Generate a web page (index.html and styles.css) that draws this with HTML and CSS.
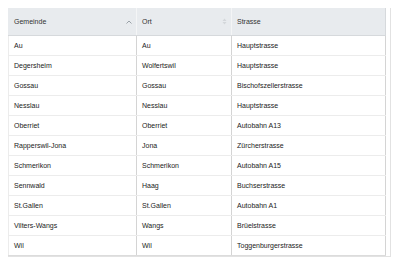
FILE: index.html
```html
<!DOCTYPE html>
<html>
<head>
<meta charset="utf-8">
<link rel="stylesheet" href="styles.css">
</head>
<body>
<div class="wrap">
<table class="grid">
<colgroup><col class="c1"><col class="c2"><col class="c3"></colgroup>
<thead>
<tr>
<th><div class="hd"><span>Gemeinde</span><svg class="sort" width="6" height="4" viewBox="0 0 6 4"><path d="M0.5 3.5 L3 1 L5.5 3.5" fill="none" stroke="#9aa1a7" stroke-width="1"/></svg></div></th>
<th><div class="hd"><span>Ort</span><svg class="sort" width="5" height="7" viewBox="0 0 5 7"><path d="M0.5 3 L2.5 0.5 L4.5 3 Z M0.5 4 L2.5 6.5 L4.5 4 Z" fill="#d3d7da"/></svg></div></th>
<th><div class="hd"><span>Strasse</span></div></th>
</tr>
</thead>
<tbody>
<tr><td>Au</td><td>Au</td><td>Hauptstrasse</td></tr>
<tr><td>Degersheim</td><td>Wolfertswil</td><td>Hauptstrasse</td></tr>
<tr><td>Gossau</td><td>Gossau</td><td>Bischofszellerstrasse</td></tr>
<tr><td>Nesslau</td><td>Nesslau</td><td>Hauptstrasse</td></tr>
<tr><td>Oberriet</td><td>Oberriet</td><td>Autobahn A13</td></tr>
<tr><td>Rapperswil-Jona</td><td>Jona</td><td>Zürcherstrasse</td></tr>
<tr><td>Schmerikon</td><td>Schmerikon</td><td>Autobahn A15</td></tr>
<tr><td>Sennwald</td><td>Haag</td><td>Buchserstrasse</td></tr>
<tr><td>St.Gallen</td><td>St.Gallen</td><td>Autobahn A1</td></tr>
<tr><td>Vilters-Wangs</td><td>Wangs</td><td>Brüelstrasse</td></tr>
<tr><td>Wil</td><td>Wil</td><td>Toggenburgerstrasse</td></tr>
</tbody>
</table>
</div>
</body>
</html>
```

FILE: styles.css
```css
html, body { margin: 0; padding: 0; background: #fff; }
body { padding: 8px; font-family: "Liberation Sans", Arial, sans-serif; font-size: 7px; color: #222; }
.wrap { width: 377px; padding-right: 5px; border-right: 1px solid #e2e2e2; border-bottom: 1px solid #e2e2e2; }
.grid { border-collapse: collapse; width: 377px; table-layout: fixed; }
.c1 { width: 128px; }
.c2 { width: 95px; }
.c3 { width: 154px; }
th { background: #e8ebee; height: 27px; padding: 0 4px 0 5px; text-align: left; font-weight: normal; color: #333; border-right: 1px solid #f4f5f6; border-bottom: 1px solid #d6d9dc; }
th:last-child { border-right: 1px solid #d6d9dc; }
.hd { display: flex; align-items: center; justify-content: space-between; }
.sort { display: block; flex: none; }
td { height: 19px; padding: 0 5px; border-bottom: 1px solid #ececec; border-right: 1px solid #d4d4d4; color: #222; white-space: nowrap; }
td:first-child { border-left: 1px solid #ececec; }
th:first-child { border-left: 1px solid #e8ebee; }
tbody tr:last-child td { border-bottom: 1px solid #dcdcdc; }
```
